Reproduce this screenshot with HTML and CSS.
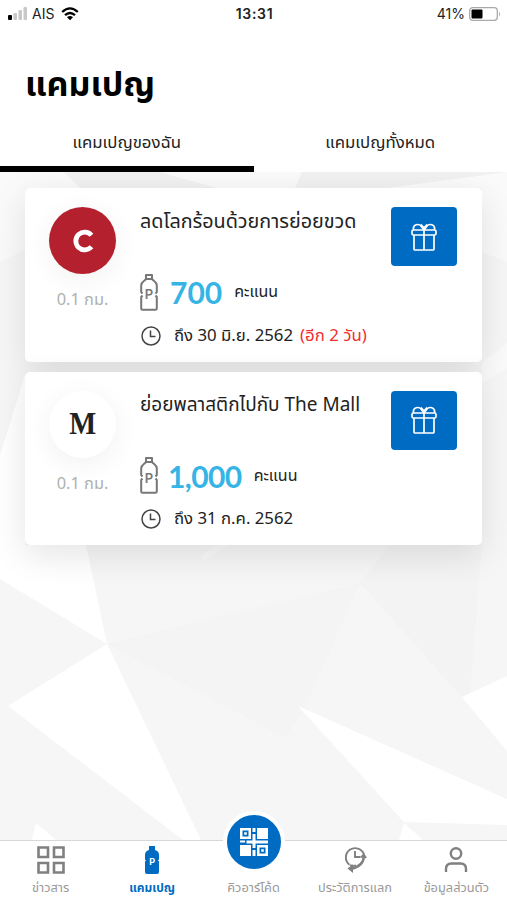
FILE: index.html
```html
<!DOCTYPE html>
<html lang="th">
<head>
  <meta charset="UTF-8">
  <meta name="viewport" content="width=device-width, initial-scale=1.0">
  <title>แคมเปญ</title>
  <link rel="stylesheet" href="styles.css">
</head>

<body>
  <!-- Shared icons -->
  <svg class="sprite" aria-hidden="true">
    <symbol id="bottle" viewBox="0 0 18 37">
      <path d="M6 1h6v4H6zM6 5C5 7 1.200 7.500 1.200 11.500V18l1.300 1.500M12 5c1 2 4.800 2.500 4.800 6.500V18l-1.300 1.500M2.500 21.500 1.200 23v11.500q0 1.300 1.300 1.300h13q1.300 0 1.300-1.300V23l-1.300-1.500" fill="none" stroke="#777" stroke-width="2" stroke-linejoin="round"/>
    </symbol>
    <symbol id="clock" viewBox="0 0 20 20">
      <circle cx="10" cy="10" r="9" fill="none" stroke="#444" stroke-width="1.500"/>
      <path d="M9.500 4.500V10.500H14.500" fill="none" stroke="#444" stroke-width="1.500"/>
    </symbol>
    <symbol id="gift" viewBox="0 0 26 28">
      <g fill="none" stroke="#fff" stroke-width="1.700" stroke-linejoin="round">
        <rect x="1" y="7" width="24" height="5" rx="1.500"/>
        <path d="M3 12v14q0 1 1 1h18q1 0 1-1V12M13 7v20M2.500 7C1.500 1 8 .500 10 3l3 4 3-4c2-2.500 8.500-2 7.500 4M10 1.500l3 3.500 3-3.500"/>
      </g>
    </symbol>
  </svg>

  <div class="app">
    <header class="statusbar">
      <div class="carrier">
        <svg width="20" height="14" viewBox="0 0 20 14">
          <rect x="0" y="8" width="4" height="5" rx="1" fill="#000"/>
          <rect x="5.500" y="6" width="3.500" height="7" rx="1" fill="#c8c8c8"/>
          <rect x="10.500" y="3" width="3.500" height="10" rx="1" fill="#c8c8c8"/>
          <rect x="15.500" y="0" width="3.500" height="13" rx="1" fill="#c8c8c8"/>
        </svg>
        <span>AIS</span>
        <svg class="wifi" width="18" height="14" viewBox="0 0 18 14">
          <path d="M1.200 5Q9-2.200 16.800 5M4 8.200q5-4.400 10 0" fill="none" stroke="#000" stroke-width="2.300"/>
          <path d="M6 10.300q3-2.500 6 0L9 13.200z"/>
        </svg>
      </div>
      <div class="time">13:31</div>
      <div class="battery">
        <span>41%</span>
        <svg width="32" height="14" viewBox="0 0 32 14">
          <rect x=".700" y=".700" width="27.600" height="12.600" rx="3" fill="#fff" stroke="#aaa" stroke-width="1.300"/>
          <rect x="2.500" y="2.500" width="11" height="9" rx="1"/>
          <path d="M30 4.500q2 2.500 0 5z" fill="#aaa"/>
        </svg>
      </div>
    </header>

    <h1 class="title">แคมเปญ</h1>

    <div class="tabs">
      <div class="tab active"><span>แคมเปญของฉัน</span></div>
      <div class="tab"><span>แคมเปญทั้งหมด</span></div>
    </div>

    <main class="content">
      <!-- Geometric background -->
      <svg class="backdrop" viewBox="0 172 507 668" preserveAspectRatio="none">
        <path d="M0 172h507v668H0z" fill="#f6f6f6"/>
        <path d="M0 172h507v90l-25-10V188H25v62L0 262z" fill="#fafafa"/>
        <path d="M64 172h95l58 16H80zM302 172h205l-120 16h-92z" fill="#f1f1f1"/>
        <path d="M0 455l25-80v170H86l21 99L0 579z" fill="#fff"/>
        <path d="M107 644 360 583l-55 125-20 30z" fill="#f4f4f4"/>
        <path d="M360 583l30-38h92l-12 150-8 2z" fill="#f3f3f3"/>
        <path d="M482 383l25-15v-25l-25 20zM205 560l-5-3 16-12h12z" fill="#fafafa"/>
        <path d="M107 644 201 840h-18L8 706zM298 706l209 93v26l-103-3zM462 697l45-21v75zM36 823l20 17H32zM404 823l19 17h-24z" fill="#fff"/>
      </svg>

      <div class="cards">
        <article class="card">
          <div class="store">
            <div class="logo red">
              <svg width="24" height="24" viewBox="0 0 24 24"><path d="M20.500 6.200A8.900 8.900 0 1 0 20.500 17.800" fill="none" stroke="#fff" stroke-width="4.800"/></svg>
            </div>
            <div class="distance">0.1 กม.</div>
          </div>
          <div class="info">
            <div class="name">ลดโลกร้อนด้วยการย่อยขวด</div>
            <div class="points">
              <span class="bottle"><svg width="18" height="37"><use href="#bottle"/></svg><b>P</b></span>
              <span class="amount">700</span>
              <span class="unit">คะแนน</span>
            </div>
            <div class="until">
              <svg width="20" height="20"><use href="#clock"/></svg>
              <span class="date">ถึง 30 มิ.ย. 2562</span>
              <span class="left">(อีก 2 วัน)</span>
            </div>
          </div>
          <button class="redeem"><svg width="26" height="28"><use href="#gift"/></svg></button>
        </article>

        <article class="card">
          <div class="store">
            <div class="logo white"><span>M</span></div>
            <div class="distance">0.1 กม.</div>
          </div>
          <div class="info">
            <div class="name mall">ย่อยพลาสติกไปกับ The Mall</div>
            <div class="points">
              <span class="bottle"><svg width="18" height="37"><use href="#bottle"/></svg><b>P</b></span>
              <span class="amount thousand">1,000</span>
              <span class="unit">คะแนน</span>
            </div>
            <div class="until">
              <svg width="20" height="20"><use href="#clock"/></svg>
              <span class="date">ถึง 31 ก.ค. 2562</span>
            </div>
          </div>
          <button class="redeem"><svg width="26" height="28"><use href="#gift"/></svg></button>
        </article>
      </div>
    </main>

    <nav class="navbar">
      <a class="item">
        <svg width="28" height="28" viewBox="0 0 28 28"><path d="M1.500 1.500h9.500v9.500H1.500zM17 1.500h9.500v9.500H17zM1.500 17h9.500v9.500H1.500zM17 17h9.500v9.500H17z" fill="none" stroke="#808080" stroke-width="2.600"/></svg>
        <span>ข่าวสาร</span>
      </a>
      <a class="item current">
        <span class="bottle-small">
          <svg width="14" height="28" viewBox="0 0 14 28"><path d="M4 0h6v4q4 1 4 5v4.500l-1 1 1 1V26q0 2-2 2H2q-2 0-2-2V15.500l1-1-1-1V9q0-4 4-5z" fill="#006bc2"/></svg>
          <b>P</b>
        </span>
        <span>แคมเปญ</span>
      </a>
      <a class="item scan">
        <span class="scan-circle">
          <svg width="28" height="28" viewBox="0 0 28 28">
            <path d="M0 0h11v11H0zM12.500 0h3v4h-3zM17 0h11v11H17zM0 12.500h5v2H0zM6.500 12.500h6V6h3v6.500H28v3H15.500V20h-3v-4.500h-6zM0 17h11v11H0zM12.500 22h3v6h-3zM17 17h11v11H17z" fill="#fff"/>
            <path d="M2.500 2.500h6v6h-6zM19.500 19.500h6v6h-6z" fill="#006bc2"/>
            <path d="M4.200 4.200h2.600v2.600H4.200zM21.200 21.200h2.600v2.600h-2.600z" fill="#fff"/>
          </svg>
        </span>
        <span>คิวอาร์โค้ด</span>
      </a>
      <a class="item">
        <svg width="28" height="28" viewBox="0 0 28 28">
          <g fill="none" stroke="#808080" stroke-width="1.900">
            <path d="M8.500 18.800A9.300 9.300 0 1 1 23 8.500M9 19q3 1.500 6 .500"/>
            <path d="M14 5v6h5.500"/>
            <path d="M20 11.500l2.800-3 2.200 3.500"/>
            <path d="M22.800 9.500q.500 10-12.800 13.500" stroke-width="2.400"/>
          </g>
          <path d="M6.500 22.500l5.500-4.200v8.700z" fill="#808080"/>
        </svg>
        <span>ประวัติการแลก</span>
      </a>
      <a class="item">
        <svg width="28" height="28" viewBox="0 0 28 28"><g fill="none" stroke="#808080" stroke-width="2.400"><circle cx="14" cy="7.500" r="5.200"/><path d="M4 26v-3q0-5.500 5.500-5.500h9q5.500 0 5.500 5.500v3"/></g></svg>
        <span>ข้อมูลส่วนตัว</span>
      </a>
    </nav>
  </div>
</body>
</html>
```
FILE: styles.css
```css
* {
  box-sizing: border-box;
}

body {
  margin: 0;
  background: #fff;
  color: #222;
  font-family: "Noto Sans Thai", "Noto Sans", "Open Sans", sans-serif;
}

svg {
  display: block;
  flex-shrink: 0;
}

.sprite {
  display: none;
}

.app {
  display: flex;
  flex-direction: column;
  width: 507px;
  height: 900px;
  overflow: hidden;
}

/* Status bar */
.statusbar {
  display: grid;
  grid-template-columns: 1fr auto 1fr;
  align-items: center;
  height: 27px;
  padding: 0 6px 0 8px;
  font-family: Inter, sans-serif;
  font-size: 14px;
}

.carrier,
.battery {
  display: flex;
  align-items: center;
}

.carrier {
  gap: 4px;
}

.wifi {
  margin-left: 3px;
}

.time {
  font-weight: 600;
  letter-spacing: 0.7px;
}

.battery {
  justify-content: flex-end;
  gap: 4px;
}

/* Title and tabs */
.title {
  height: 87px;
  margin: 0;
  padding-left: 25px;
  color: #000;
  font-size: 34px;
  font-weight: 700;
  line-height: 117px;
  white-space: nowrap;
}

.tabs {
  display: flex;
  height: 58px;
}

.tab {
  display: flex;
  flex: 1;
  justify-content: center;
  border-bottom: 6px solid transparent;
  font-size: 16.8px;
  line-height: 58px;
}

.tab.active {
  border-color: #000;
}

/* Campaign list */
.content {
  display: grid;
  height: 668px;
}

.backdrop,
.cards {
  grid-area: 1 / 1;
  width: 100%;
}

.backdrop {
  height: 668px;
}

.cards {
  z-index: 1;
  display: flex;
  flex-direction: column;
  gap: 10px;
  padding: 16px 25px;
}

.card {
  display: flex;
  height: 173.5px;
  padding: 19px 25px 0 24px;
  border-radius: 5px;
  background: #fff;
  box-shadow: 0 10px 35px rgba(0, 0, 0, 0.11);
}

.store {
  width: 67px;
  text-align: center;
}

.logo {
  display: flex;
  align-items: center;
  justify-content: center;
  width: 67px;
  height: 67px;
  border-radius: 50%;
  box-shadow: 0 6px 28px rgba(0, 0, 0, 0.06);
}

.logo.red {
  background: #b5202f;
}

.logo.white {
  background: #fff;
  color: #222;
  font-family: "Liberation Serif", serif;
  font-size: 31px;
  font-weight: 700;
}

.logo.white span {
  transform: scaleX(0.92);
}

.distance {
  margin-top: 14px;
  color: #b0b0b0;
  font-size: 16.4px;
  line-height: 25px;
  white-space: nowrap;
}

.info {
  flex: 1;
  min-width: 0;
  padding-left: 24px;
  white-space: nowrap;
}

.name {
  height: 66px;
  font-size: 19.8px;
  line-height: 30px;
}

.name.mall {
  font-size: 19px;
}

.points {
  display: flex;
  align-items: center;
  height: 38px;
}

.bottle {
  display: grid;
  place-items: center;
  width: 18px;
}

.bottle svg,
.bottle b,
.bottle-small svg,
.bottle-small b {
  grid-area: 1 / 1;
}

.bottle b {
  padding-top: 4px;
  color: #777;
  font: 600 13px Inter, sans-serif;
}

.amount {
  margin-left: 12px;
  color: #35b4e5;
  font-family: Lato, sans-serif;
  font-size: 30px;
  font-weight: 700;
  line-height: 36px;
}

.amount.thousand {
  margin-left: 10px;
  letter-spacing: -0.6px;
}

.unit {
  margin-left: 12px;
  font-size: 16px;
}

.until {
  display: flex;
  align-items: center;
  height: 49px;
  padding-left: 1px;
  font-size: 16.8px;
}

.date {
  margin-left: 13px;
}

.left {
  margin-left: 7px;
  color: #f02f2f;
}

.redeem {
  display: flex;
  flex-shrink: 0;
  align-items: center;
  justify-content: center;
  width: 66px;
  height: 59px;
  padding: 0;
  border: none;
  border-radius: 4px;
  background: #006bc2;
}

/* Bottom navigation */
.navbar {
  z-index: 2;
  display: flex;
  height: 60px;
  border-top: 1px solid #d8d8d8;
  background: #fff;
}

.item {
  display: flex;
  flex: 1;
  flex-direction: column;
  align-items: center;
  padding-top: 5px;
  color: #999;
  font-size: 12.8px;
  line-height: 28px;
  white-space: nowrap;
}

.item.current {
  color: #006bc2;
  font-size: 12px;
  font-weight: 700;
}

.bottle-small {
  display: grid;
  place-items: center;
  height: 28px;
}

.bottle-small b {
  padding-top: 2px;
  color: #fff;
  font: 700 9px Inter, sans-serif;
}

.scan-circle {
  display: flex;
  flex-shrink: 0;
  align-items: center;
  justify-content: center;
  width: 62px;
  height: 62px;
  margin: -35px 0 1px;
  border: 4px solid #fff;
  border-radius: 50%;
  background: #006bc2;
}
```
